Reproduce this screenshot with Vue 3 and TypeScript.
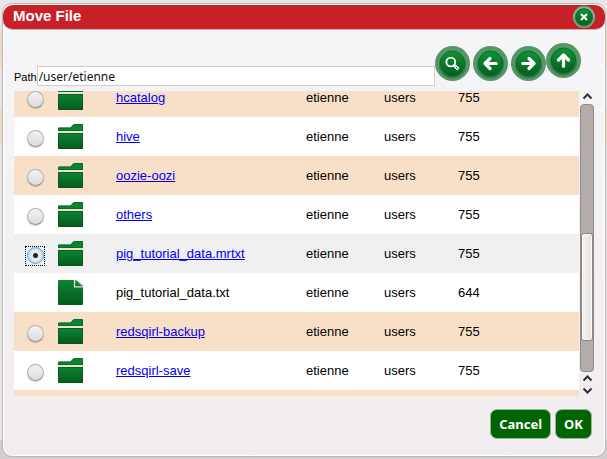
<script setup lang="ts">
import { ref } from 'vue'

interface Entry {
  name: string
  directory: boolean
  owner: string
  group: string
  mode: string
}

const dir = (name: string): Entry => ({ name, directory: true, owner: 'etienne', group: 'users', mode: '755' })

const entries: Entry[] = [
  dir('hcatalog'),
  dir('hive'),
  dir('oozie-oozi'),
  dir('others'),
  dir('pig_tutorial_data.mrtxt'),
  { name: 'pig_tutorial_data.txt', directory: false, owner: 'etienne', group: 'users', mode: '644' },
  dir('redsqirl-backup'),
  dir('redsqirl-save'),
]

const tools = [
  { label: 'Back', d: 'M23.2 17.5H12.5M17 12.5l-5 5 5 5' },
  { label: 'Forward', d: 'M11.8 17.5H22.5M18 12.5l5 5-5 5' },
]

const path = ref('/user/etienne')
const selected = ref('pig_tutorial_data.mrtxt')
</script>

<template>
  <div class="page">
    <svg class="defs" width="0" height="0" aria-hidden="true">
      <defs>
        <linearGradient id="leaf" x1="0" y1="0" x2="0" y2="1">
          <stop offset="0" stop-color="#0b8431" />
          <stop offset="1" stop-color="#065a1d" />
        </linearGradient>
        <linearGradient id="disc" x1="0" y1="0" x2="0" y2="1">
          <stop offset="0" stop-color="#0f9438" />
          <stop offset="1" stop-color="#065f1d" />
        </linearGradient>
      </defs>
    </svg>
    <section class="dialog" role="dialog" aria-labelledby="dialog-title">
      <header class="titlebar">
        <h1 id="dialog-title">Move File</h1>
        <button class="round close" type="button" aria-label="Close">
          <svg viewBox="0 0 22 22">
            <circle class="rim" cx="11" cy="11" r="11" />
            <circle class="shade" cx="11" cy="11.6" r="8.3" />
            <circle class="disc" cx="11" cy="11" r="8" />
            <path d="M8 8l6 6M14 8l-6 6" stroke-width="2" />
          </svg>
        </button>
      </header>

      <div class="body">
        <div class="toolbar">
          <label for="path">Path</label>
          <input id="path" v-model="path" class="path" type="text" />
          <div class="tools">
            <button class="round" type="button" aria-label="Search">
              <svg viewBox="0 0 35 35">
                <circle class="rim" cx="17.5" cy="17.5" r="17.5" />
                <circle class="shade" cx="17.5" cy="19" r="12.6" />
                <circle class="disc" cx="17.5" cy="17.3" r="12.2" />
                <circle cx="15.8" cy="16" r="4.4" stroke-width="1.9" />
                <path d="M19.2 19.4l4.2 3.8" stroke-width="3.2" />
                <path d="M20.7 20.8l2 1.8" stroke="#087029" stroke-width="1" />
              </svg>
            </button>
            <button v-for="tool in tools" :key="tool.label" class="round" type="button" :aria-label="tool.label">
              <svg viewBox="0 0 35 35">
                <circle class="rim" cx="17.5" cy="17.5" r="17.5" />
                <circle class="shade" cx="17.5" cy="19" r="12.6" />
                <circle class="disc" cx="17.5" cy="17.3" r="12.2" />
                <path :d="tool.d" stroke-width="3.2" stroke-linecap="round" stroke-linejoin="round" />
              </svg>
            </button>
          </div>
          <button class="round" type="button" aria-label="Up">
            <svg viewBox="0 0 35 35">
              <circle class="rim" cx="17.5" cy="17.5" r="17.5" />
              <circle class="shade" cx="17.5" cy="19" r="12.6" />
              <circle class="disc" cx="17.5" cy="17.3" r="12.2" />
              <path d="M17.5 23.2V12.5M12.5 17l5-5 5 5" stroke-width="3.2" stroke-linecap="round" stroke-linejoin="round" />
            </svg>
          </button>
        </div>

        <div class="browser">
          <div class="viewport">
            <table class="files">
              <colgroup>
                <col class="c-pick" /><col class="c-icon" /><col class="c-name" />
                <col class="c-owner" /><col class="c-group" /><col />
              </colgroup>
              <tbody>
                <tr v-for="entry in entries" :key="entry.name" :class="{ current: entry.name === selected }">
                  <td class="pick">
                    <span v-if="entry.directory" class="focus-box">
                      <input
                        v-model="selected"
                        type="radio"
                        name="target"
                        :value="entry.name"
                        :aria-label="entry.name"
                      />
                    </span>
                  </td>
                  <td>
                    <svg v-if="entry.directory" class="kind" viewBox="0 0 25 25">
                      <path d="M0 7V4.6Q0 3.5 1.1 3.5H12.5L15 .7Q15.5 0 16.5 0H24Q25 0 25 1V7Z" fill="#0b8431" />
                      <path d="M.5 6.5V4.6Q.5 4 1.1 4H12.7L15.5 1Q15.8.5 16.5.5H24Q24.5.5 24.5 1V6.5Z" fill="none" stroke="#096126" stroke-width=".7" />
                      <path d="M0 7H25V9H0Z" fill="#f0dfc9" />
                      <path d="M0 9H25V24Q25 25 24 25H1Q0 25 0 24Z" fill="url(#leaf)" />
                      <path d="M.5 9.5H24.5V24.5H.5Z" fill="none" stroke="#06551b" stroke-width=".7" />
                    </svg>
                    <svg v-else class="kind" viewBox="0 0 25 25">
                      <path d="M1 0H17L25 7V24Q25 25 24 25H1Q0 25 0 24V1Q0 0 1 0Z" fill="url(#leaf)" />
                      <path d="M16.5 0V6.8H25" fill="none" stroke="#f0e6d4" stroke-width="1.3" />
                      <path d="M17.5 0L25 6.2" fill="none" stroke="#096126" stroke-width=".8" />
                    </svg>
                  </td>
                  <td>
                    <a v-if="entry.directory" href="#">{{ entry.name }}</a>
                    <template v-else>{{ entry.name }}</template>
                  </td>
                  <td>{{ entry.owner }}</td>
                  <td>{{ entry.group }}</td>
                  <td>{{ entry.mode }}</td>
                </tr>
                <tr>
                  <td colspan="6"></td>
                </tr>
              </tbody>
            </table>
          </div>
          <div class="scrollbar" aria-hidden="true">
            <svg class="chevron first" viewBox="0 0 13 12"><path d="M2.5 7.5l4-4 4 4" /></svg>
            <div class="track">
              <div class="before"></div>
              <div class="thumb"></div>
              <div class="after"></div>
            </div>
            <svg class="chevron" viewBox="0 0 13 12"><path d="M2.5 8.5l4-4 4 4" /></svg>
            <svg class="chevron" viewBox="0 0 13 12"><path d="M2.5 4.5l4 4 4-4" /></svg>
          </div>
        </div>

        <footer class="actions">
          <button type="button">Cancel</button>
          <button type="button">OK</button>
        </footer>
      </div>
    </section>
  </div>
</template>

<style>
body {
  background: #e5e5e5;
}
</style>

<style scoped>
* {
  box-sizing: border-box;
}
.page {
  height: 100vh;
  min-height: 320px;
  padding: 3px 1px 2px 2px;
  display: flex;
  background: linear-gradient(#e6e6e6 0 29px, #ecdccb 29px 68px, #e6e6e6 68px 107px, #ecdccb 107px 146px, #e6e6e6 146px 440px, #cfcdcd 440px);
  font-family: "Liberation Sans", Arial, sans-serif;
  color: #000;
}
.defs {
  position: absolute;
}
.dialog {
  flex: 1;
  min-width: 0;
  display: flex;
  flex-direction: column;
  border: 1px solid #b9b7af;
  border-radius: 10px;
  background: linear-gradient(#f5f6f8, #f1ecf0);
  box-shadow: inset 0 0 0 1px #fff;
}
.titlebar {
  height: 25px;
  margin-top: 1px;
  padding: 0 10px;
  display: flex;
  align-items: center;
  justify-content: space-between;
  background: #c72127;
  border-radius: 10px;
  border-bottom: 1px solid #dba9ab;
}
h1 {
  margin: 0;
  padding-bottom: 3px;
  font-size: 15px;
  line-height: 18px;
  color: #fff;
}
.round {
  flex: none;
  width: 35px;
  height: 35px;
  padding: 0;
  border: 0;
  border-radius: 50%;
  background: none;
}
.round svg {
  display: block;
  width: 100%;
  height: 100%;
  fill: none;
  stroke: #fff;
}
.round .rim {
  fill: #559669;
  stroke: none;
}
.round .shade {
  fill: #1a5c2b;
  stroke: #387f4d;
  stroke-width: 2;
}
.round .disc {
  fill: url(#disc);
  stroke: #0a6a28;
  stroke-width: 1;
}
.close {
  width: 22px;
  height: 22px;
}
.close .rim {
  fill: #7cb08c;
}
.body {
  flex: 1;
  min-height: 0;
  display: flex;
  flex-direction: column;
  padding: 13px 11px 17px;
}
.toolbar {
  height: 48px;
  flex: none;
  display: flex;
  align-items: flex-start;
  padding-right: 13px;
}
label {
  align-self: flex-end;
  padding-bottom: 7px;
  font-size: 11px;
  line-height: 13px;
}
.path {
  flex: 1;
  min-width: 0;
  height: 20px;
  align-self: flex-end;
  margin-bottom: 5px;
  padding: 0 1px;
  border: 1px solid #d2cec6;
  background: #fff;
  color: #111;
  font: 12px/18px "Noto Sans", "Open Sans", sans-serif;
}
.tools {
  display: flex;
  gap: 3px;
  padding-top: 3px;
}
.browser {
  flex: 1;
  min-height: 0;
  display: flex;
}
.viewport {
  flex: 1;
  min-width: 0;
  overflow: hidden;
}
.files {
  width: 100%;
  margin-top: -13px;
  table-layout: fixed;
  border-collapse: collapse;
  font-size: 13px;
  line-height: 15px;
}
.c-pick { width: 44px; }
.c-icon { width: 58px; }
.c-name { width: 190px; }
.c-owner { width: 78px; }
.c-group { width: 74px; }
tr {
  height: 39px;
  background: #fff;
}
tr:nth-child(odd) {
  background: #f8e0c8;
}
tr.current {
  background: #f0f0f0;
}
td {
  padding: 0;
  vertical-align: middle;
}
td a {
  color: #0000ee;
}
.pick {
  padding: 4px 0 0 11px;
}
.focus-box {
  display: block;
  width: 20px;
  height: 20px;
  border: 1px solid transparent;
}
.focus-box:has(:checked) {
  border: 1px dotted #000;
}
.focus-box input {
  appearance: none;
  display: block;
  width: 17px;
  height: 17px;
  margin: 0 0 0 1px;
  border: 1px solid #b4b2ae;
  border-bottom-color: #8f8d89;
  border-radius: 50%;
  background: linear-gradient(#f3f2f1, #dddcda);
  box-shadow: 0 1px 1px #0003;
}
.focus-box input:checked {
  border: 1px solid #62aed8;
  background: radial-gradient(circle, #222 0 2px, #e9eaea 3px);
  background-origin: border-box;
  box-shadow: inset 0 0 0 1px #a5d3ea;
}
.kind {
  display: block;
  width: 25px;
  height: 25px;
}
.scrollbar {
  width: 15px;
  padding-left: 1px;
  display: flex;
  flex-direction: column;
  align-items: center;
}
.chevron {
  flex: none;
  width: 13px;
  height: 12px;
  fill: none;
  stroke: #333;
  stroke-width: 2;
}
.first {
  margin-bottom: 1px;
}
.track {
  flex: 1;
  align-self: stretch;
  display: flex;
  flex-direction: column;
  border: 1px solid #918b87;
  border-radius: 4px;
  background: #b3aca8;
}
.before {
  flex: 129;
}
.thumb {
  flex: 107;
  border: 1px solid #8f8986;
  border-radius: 3px;
  background: linear-gradient(90deg, #f6f5f3, #e3e1dd);
  box-shadow: inset 0 0 0 1px #faf9f8;
}
.after {
  flex: 30;
}
.actions {
  display: flex;
  justify-content: flex-end;
  gap: 4px;
  padding: 13px 2px 0 0;
}
.actions button {
  height: 30px;
  padding: 0 8px;
  border: 1px solid #9db29a;
  border-radius: 7px;
  background: #006400;
  color: #fff;
  font: bold 13px/28px "Noto Sans", "Open Sans", sans-serif;
}
</style>
